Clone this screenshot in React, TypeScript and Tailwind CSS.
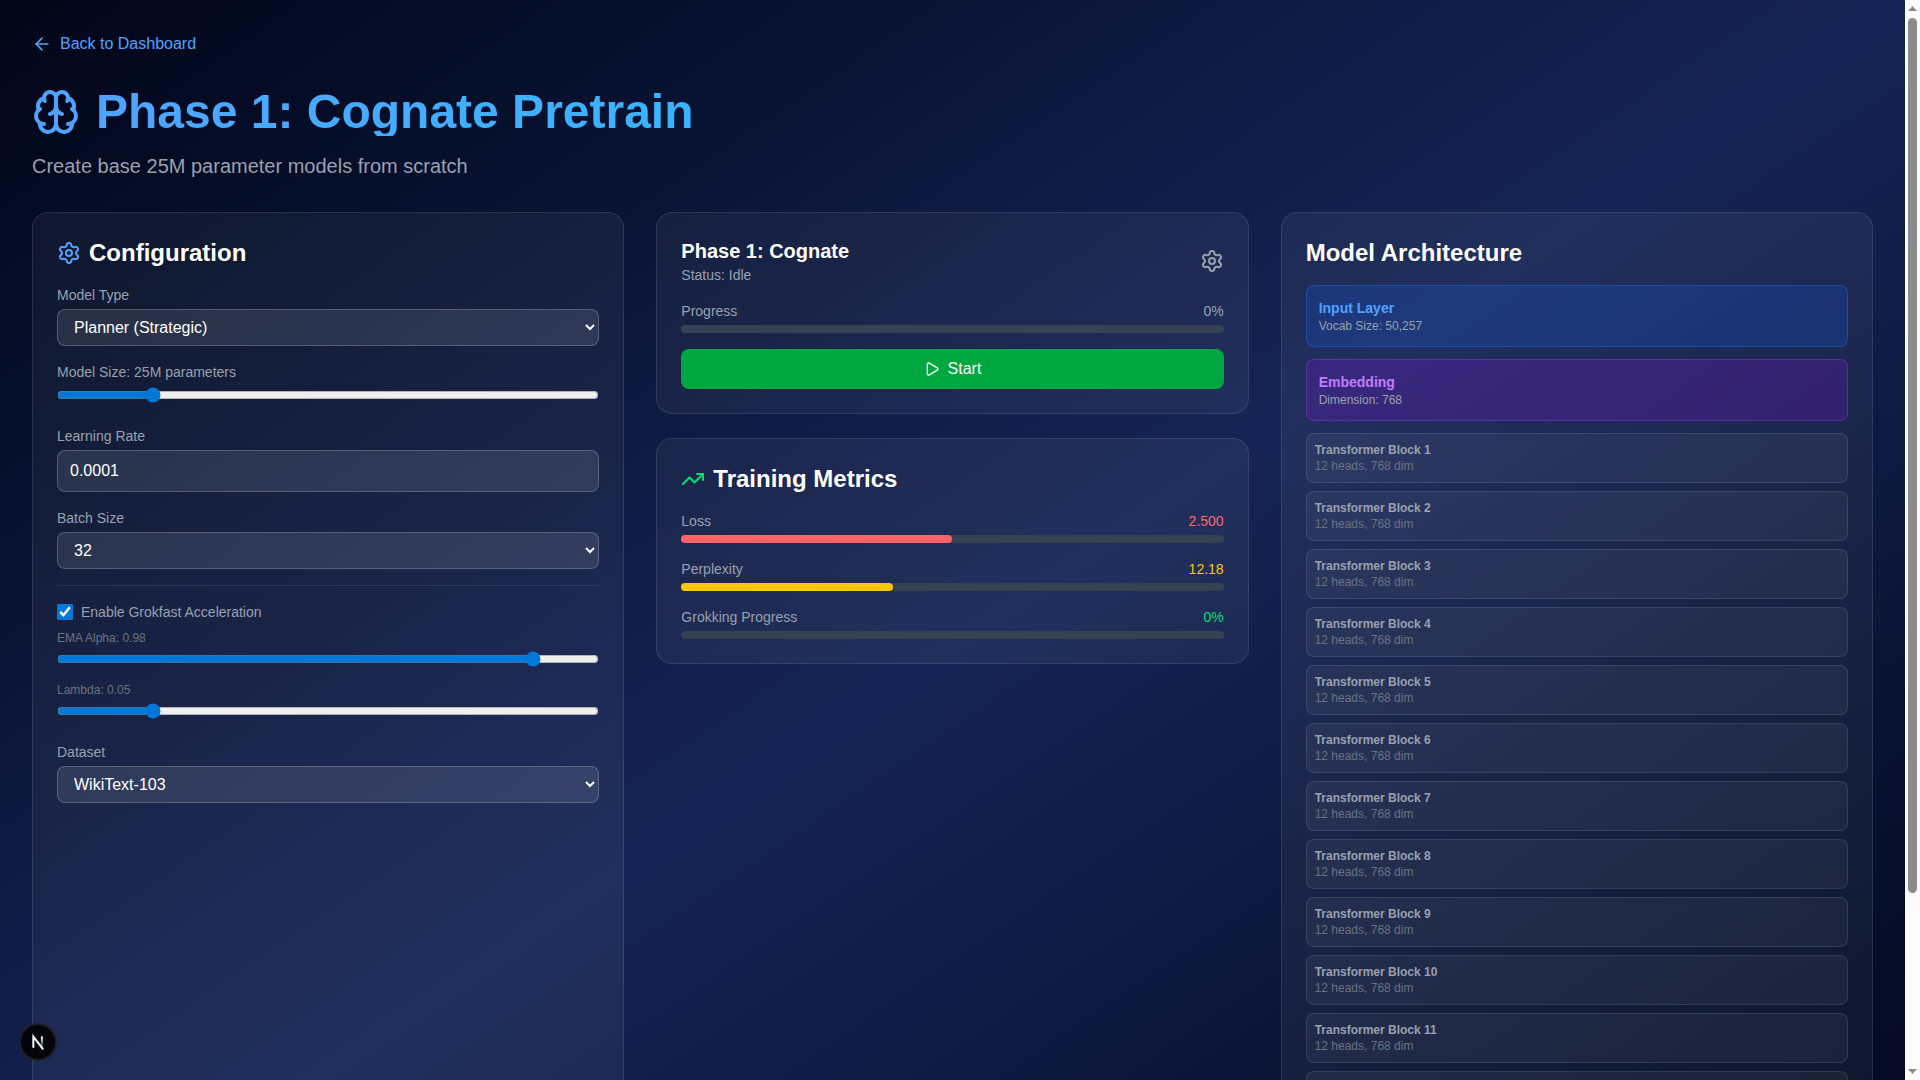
import { useId, useState } from "react";
import type { ReactNode } from "react";
import { ArrowLeft, Brain, Play, Settings, TrendingUp } from "lucide-react";

function Card({ children, className = "" }: { children: ReactNode; className?: string }) {
  return (
    <section className={`rounded-2xl border border-white/10 bg-white/5 p-6 ${className}`}>{children}</section>
  );
}

function Select({ label, options }: { label: string; options: string[] }) {
  const id = useId();
  return (
    <div>
      <label htmlFor={id} className="mb-1 block text-sm text-gray-400">
        {label}
      </label>
      <select id={id} className="block w-full rounded-lg border border-white/20 bg-white/10 px-3 py-2 text-white">
        {options.map((o) => (
          <option key={o} className="text-black">
            {o}
          </option>
        ))}
      </select>
    </div>
  );
}

type SliderProps = {
  name: string;
  unit?: string;
  min: number;
  max: number;
  step: number;
  initial: number;
  small?: boolean;
};

function Slider({ name, unit = "", min, max, step, initial, small }: SliderProps) {
  const id = useId();
  const [value, setValue] = useState(initial);
  return (
    <div>
      <label htmlFor={id} className={small ? "mb-1 block text-xs text-gray-500" : "mb-1 block text-sm text-gray-400"}>
        {name}: {value}
        {unit}
      </label>
      <div className="h-6">
        <input
          id={id}
          type="range"
          min={min}
          max={max}
          step={step}
          value={value}
          onChange={(e) => setValue(Number(e.target.value))}
          className="w-full accent-[#0078d7]"
        />
      </div>
    </div>
  );
}

function Meter({ label, value, tone, bar, percent }: { label: string; value: string; tone: string; bar: string; percent: number }) {
  return (
    <div>
      <div className="mb-1 flex justify-between text-sm">
        <span className="text-gray-400">{label}</span>
        <span className={tone}>{value}</span>
      </div>
      <div className="h-2 rounded-full bg-[#364153]">
        <div className={`h-2 rounded-full ${bar}`} style={{ width: `${percent}%` }} />
      </div>
    </div>
  );
}

function Layer({ title, detail, box, tone }: { title: string; detail: string; box: string; tone: string }) {
  return (
    <div className={`rounded-lg border p-3 ${box}`}>
      <div className={`text-sm font-semibold ${tone}`}>{title}</div>
      <div className="text-xs text-gray-400">{detail}</div>
    </div>
  );
}

function NextBadge() {
  return (
    <button
      aria-label="Open developer tools"
      className="fixed bottom-5 left-5 flex size-9 items-center justify-center rounded-full bg-black/85 ring-1 ring-[#222222] inset-ring inset-ring-white/10"
    >
      <svg width="36" height="36" viewBox="0 0 40 40" fill="none">
        <defs>
          <linearGradient id="diag" x1="9.95" y1="11.13" x2="15.67" y2="18.15" gradientUnits="userSpaceOnUse">
            <stop stopColor="white" />
            <stop offset="0.6" stopColor="white" />
            <stop offset="1" stopColor="white" stopOpacity="0" />
          </linearGradient>
          <linearGradient id="stem" x1="11.82" y1="1.5" x2="11.79" y2="14.5" gradientUnits="userSpaceOnUse">
            <stop stopColor="white" />
            <stop offset="1" stopColor="white" stopOpacity="0" />
          </linearGradient>
        </defs>
        <g transform="translate(12.5 13)" strokeWidth="2.2">
          <path d="M13.3 15.2 L2.34 1 V13.4" stroke="url(#diag)" strokeLinejoin="miter" />
          <path d="M11.825 0.8 V13.1" stroke="url(#stem)" />
        </g>
      </svg>
    </button>
  );
}

function Scrollbar() {
  return (
    <div aria-hidden="true" className="flex w-[15px] shrink-0 flex-col items-center bg-[#fcfcfc] py-[6px]">
      <svg width="9" height="5" viewBox="0 0 9 5" fill="#8b8b8b">
        <path d="M4.5 0 9 5H0z" />
      </svg>
      <div className="mt-[7px] mb-[1px] flex w-full flex-1 flex-col items-center">
        <div className="h-5/6 w-[9px] rounded-full bg-[#8b8b8b]" />
      </div>
      <svg width="9" height="5" viewBox="0 0 9 5" fill="#8b8b8b">
        <path d="M0 0h9L4.5 5z" />
      </svg>
    </div>
  );
}

const blocks = Array.from({ length: 12 }, (_, i) => i + 1);

export default function App() {
  return (
    <div className="flex h-screen overflow-hidden font-['Liberation_Sans',Arial,sans-serif] text-base text-white">
      <div className="min-w-0 flex-1 overflow-y-auto [scrollbar-width:none]">
        <main className="bg-linear-to-br from-slate-950 via-blue-950 to-slate-950 p-8">
          <header className="mb-8">
            <a href="#dashboard" className="mb-8 flex w-fit items-center gap-2 text-blue-400">
              <ArrowLeft size={20} />
              Back to Dashboard
            </a>
            <h1 className="mb-4 flex items-center gap-4 bg-linear-to-r from-blue-400 to-cyan-400 bg-clip-text text-5xl leading-none font-bold text-transparent">
              <Brain size={48} className="text-blue-400" />
              Phase 1: Cognate Pretrain
            </h1>
            <p className="text-xl text-gray-400">Create base 25M parameter models from scratch</p>
          </header>

          <div className="grid grid-cols-3 gap-8">
            <Card>
              <h2 className="mb-4 flex items-center gap-2 text-2xl font-semibold">
                <Settings size={24} className="text-blue-400" />
                Configuration
              </h2>
              <div className="space-y-4">
                <Select label="Model Type" options={["Planner (Strategic)", "Reasoner (Analytical)", "Memory (Knowledge)"]} />
                <Slider name="Model Size" unit="M parameters" min={10} max={100} step={5} initial={25} />
                <div>
                  <label htmlFor="learning-rate" className="mb-1 block text-sm text-gray-400">
                    Learning Rate
                  </label>
                  <input
                    id="learning-rate"
                    type="text"
                    defaultValue="0.0001"
                    className="block w-full rounded-lg border border-white/20 bg-white/10 px-3 py-2 text-white"
                  />
                </div>
                <Select label="Batch Size" options={["32", "64", "128"]} />
                <div className="space-y-2 border-t border-white/10 pt-4">
                  <label className="flex items-center gap-2 text-sm text-gray-400">
                    <input type="checkbox" defaultChecked className="size-4 accent-[#0078d7]" />
                    Enable Grokfast Acceleration
                  </label>
                  <Slider name="EMA Alpha" min={0.9} max={0.99} step={0.01} initial={0.98} small />
                  <Slider name="Lambda" min={0.01} max={0.25} step={0.01} initial={0.05} small />
                </div>
                <Select label="Dataset" options={["WikiText-103", "OpenWebText", "C4"]} />
              </div>
            </Card>

            <div className="space-y-6">
              <Card>
                <div className="mb-4 flex items-center justify-between">
                  <div>
                    <h3 className="text-xl font-semibold">Phase 1: Cognate</h3>
                    <p className="text-sm text-gray-400">Status: Idle</p>
                  </div>
                  <button aria-label="Phase settings" className="text-gray-400">
                    <Settings size={24} />
                  </button>
                </div>
                <Meter label="Progress" value="0%" tone="text-gray-400" bar="bg-blue-400" percent={0} />
                <button className="mt-4 flex w-full items-center justify-center gap-2 rounded-lg bg-green-600 px-4 py-2">
                  <Play size={16} />
                  Start
                </button>
              </Card>

              <Card>
                <h2 className="mb-4 flex items-center gap-2 text-2xl font-semibold">
                  <TrendingUp size={24} className="text-green-400" />
                  Training Metrics
                </h2>
                <div className="space-y-4">
                  <Meter label="Loss" value="2.500" tone="text-red-400" bar="bg-red-400" percent={50} />
                  <Meter label="Perplexity" value="12.18" tone="text-yellow-400" bar="bg-yellow-400" percent={39} />
                  <Meter label="Grokking Progress" value="0%" tone="text-green-400" bar="bg-green-400" percent={0} />
                </div>
              </Card>
            </div>

            <Card className="pb-16">
              <h2 className="mb-4 text-2xl font-semibold">Model Architecture</h2>
              <div className="space-y-3">
                <Layer title="Input Layer" detail="Vocab Size: 50,257" box="border-blue-500/30 bg-blue-600/20" tone="text-blue-400" />
                <Layer title="Embedding" detail="Dimension: 768" box="border-purple-500/30 bg-purple-600/20" tone="text-purple-400" />
                <div className="space-y-2">
                  {blocks.map((n) => (
                    <div key={n} className="rounded-lg border border-white/10 bg-white/5 p-2 text-xs">
                      <div className="font-semibold text-gray-400">Transformer Block {n}</div>
                      <div className="text-gray-500">12 heads, 768 dim</div>
                    </div>
                  ))}
                </div>
                <Layer title="Output Layer" detail="Vocab Size: 50,257" box="border-green-500/30 bg-green-600/20" tone="text-green-400" />
              </div>
            </Card>
          </div>
        </main>
      </div>
      <Scrollbar />
      <NextBadge />
    </div>
  );
}
